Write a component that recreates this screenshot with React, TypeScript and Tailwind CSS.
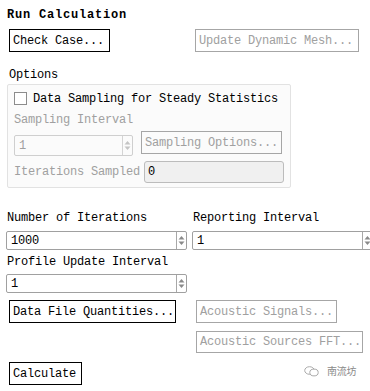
const MONO = "font-['Liberation_Mono',monospace]";

function Spin({ dim }: { dim?: boolean }) {
  const c = dim ? '#c4c4c4' : '#8a8a8a';
  return (
    <div className={`w-[10px] self-stretch flex items-center justify-center border-l ${dim ? 'border-[#d4d4d4]' : 'border-[#a8a8a8]'}`}>
      <svg width="7" height="11" viewBox="0 0 7 11">
        <path d="M3.5 1 L6.5 4.5 L0.5 4.5 Z" fill={c} />
        <path d="M3.5 10 L6.5 6.5 L0.5 6.5 Z" fill={c} />
      </svg>
    </div>
  );
}

function Btn({ label, w, h = 23, dim }: { label: string; w: number; h?: number; dim?: boolean }) {
  return (
    <div
      className={`flex items-center px-[3px] border whitespace-nowrap ${dim ? 'border-[#a6a6a6] text-[#a0a0a0]' : 'border-black text-black'}`}
      style={{ width: w, height: h }}
    >
      {label}
    </div>
  );
}

function NumInput({ value, w, dim }: { value: string; w: number; dim?: boolean }) {
  return (
    <div
      className={`flex h-full rounded-[2px] border ${dim ? 'border-[#cfcfcf] text-[#a0a0a0]' : 'border-[#a0a0a0] text-black'}`}
      style={{ width: w }}
    >
      <div className="flex-1 flex items-center pl-[4px]">{value}</div>
      <Spin dim={dim} />
    </div>
  );
}

export default function App() {
  return (
    <div className={`w-[370px] h-[391px] bg-white overflow-hidden relative ${MONO} text-[12px] tracking-[-0.2px] leading-[14px] text-black`}>
      {/* title */}
      <div className="pl-[7px] pt-[8px] h-[22px] font-bold tracking-[0.8px]">Run Calculation</div>

      <div className="mt-[7px] flex">
        <div className="ml-[9px]"><Btn label="Check Case..." w={101} /></div>
        <div className="ml-[85px]"><Btn label="Update Dynamic Mesh..." w={164} dim /></div>
      </div>

      <div className="mt-[16px] pl-[9px] h-[14px]">Options</div>

      {/* options group */}
      <div className="mt-[2px] ml-[7px] w-[284px] h-[104px] border border-[#e2e2e2] rounded-[2px] bg-[#fbfbfb] px-[6px]">
        <div className="mt-[7px] flex items-center h-[13px]">
          <div className="w-[13px] h-[13px] border border-[#8c8c8c] bg-white" />
          <span className="ml-[6px]">Data Sampling for Steady Statistics</span>
        </div>
        <div className="mt-[8px] h-[14px] text-[#a0a0a0]">Sampling Interval</div>
        <div className="mt-[4px] flex items-start">
          <div className="mt-[4px] h-[21px]"><NumInput value="1" w={119} dim /></div>
          <div className="ml-[8px]"><Btn label="Sampling Options..." w={141} dim /></div>
        </div>
        <div className="mt-[5px] flex items-center h-[22px]">
          <span className="text-[#a0a0a0]">Iterations Sampled</span>
          <div className="ml-[4px] w-[140px] h-[22px] rounded-[3px] border border-[#bcbcbc] bg-[#f0f0f0] flex items-center pl-[3px]">0</div>
        </div>
      </div>

      {/* iterations */}
      <div className="mt-[23px] flex h-[14px]">
        <div className="pl-[7px] w-[193px]">Number of Iterations</div>
        <div>Reporting Interval</div>
      </div>
      <div className="mt-[6px] flex h-[19px]">
        <div className="ml-[6px]"><NumInput value="1000" w={181} /></div>
        <div className="ml-[5px]"><NumInput value="1" w={181} /></div>
      </div>
      <div className="mt-[5px] pl-[7px] h-[14px]">Profile Update Interval</div>
      <div className="mt-[5px] flex h-[19px]">
        <div className="ml-[6px]"><NumInput value="1" w={181} /></div>
      </div>

      <div className="mt-[7px] flex">
        <div className="ml-[9px]"><Btn label="Data File Quantities..." w={167} /></div>
        <div className="ml-[20px]"><Btn label="Acoustic Signals..." w={141} dim /></div>
      </div>
      <div className="mt-[8px] flex">
        <div className="ml-[196px]"><Btn label="Acoustic Sources FFT..." w={167} h={22} dim /></div>
      </div>
      <div className="mt-[9px] flex">
        <div className="ml-[9px]"><Btn label="Calculate" w={73} /></div>
      </div>

      {/* watermark */}
      <div className="absolute left-[304px] top-[365px] flex items-center gap-[8px] text-[#8a8a8a]">
        <svg width="15" height="11" viewBox="0 0 15 11" fill="none" stroke="#aaaaaa" strokeWidth="1">
          <ellipse cx="5.5" cy="4.5" rx="4.8" ry="3.8" />
          <ellipse cx="10" cy="6.5" rx="4.2" ry="3.4" fill="white" />
        </svg>
        <span className="font-['Noto_Sans_CJK_SC',sans-serif] text-[10px] leading-[12px]">南流坊</span>
      </div>
    </div>
  );
}
